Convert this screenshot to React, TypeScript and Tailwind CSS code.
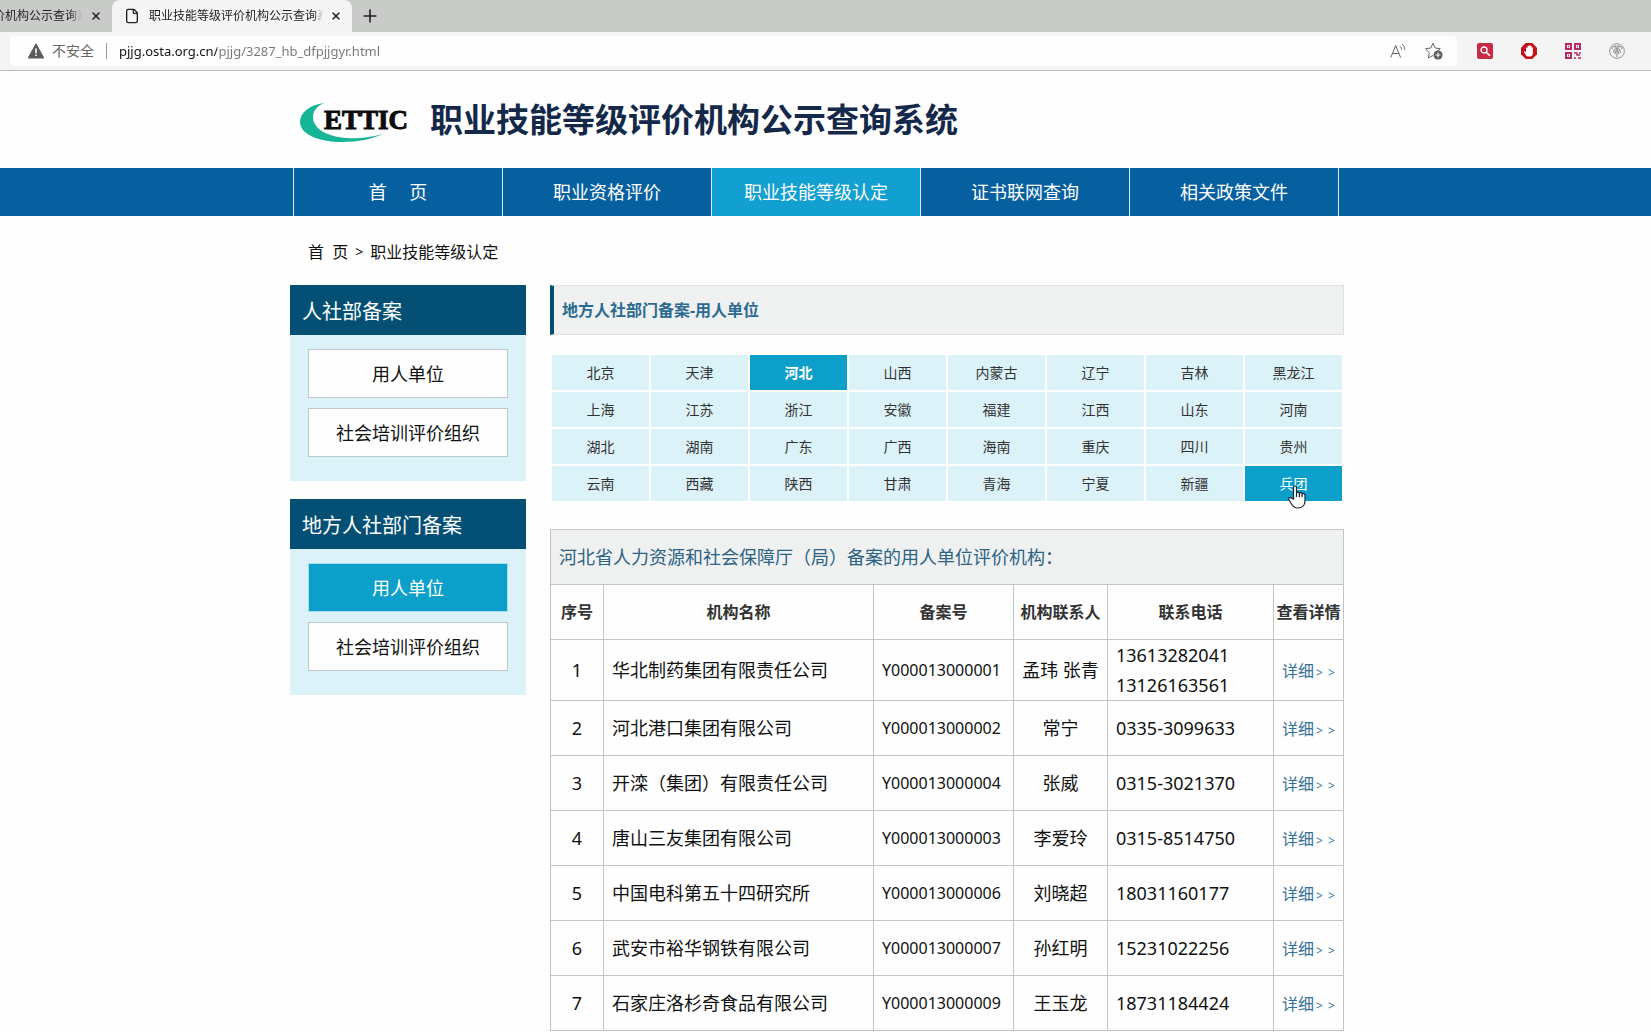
import React from 'react';
import { File, Plus, X } from 'lucide-react';

interface Organization {
  id: number;
  name: string;
  record: string;
  contact: string;
  phones: string[];
}

const NAV_ITEMS = ['首\u2003 页', '职业资格评价', '职业技能等级认定', '证书联网查询', '相关政策文件'];

const REGIONS = [
  '北京', '天津', '河北', '山西', '内蒙古', '辽宁', '吉林', '黑龙江',
  '上海', '江苏', '浙江', '安徽', '福建', '江西', '山东', '河南',
  '湖北', '湖南', '广东', '广西', '海南', '重庆', '四川', '贵州',
  '云南', '西藏', '陕西', '甘肃', '青海', '宁夏', '新疆', '兵团',
];

const ORGANIZATIONS: Organization[] = [
  { id: 1, name: '华北制药集团有限责任公司', record: 'Y000013000001', contact: '孟玮 张青', phones: ['13613282041', '13126163561'] },
  { id: 2, name: '河北港口集团有限公司', record: 'Y000013000002', contact: '常宁', phones: ['0335-3099633'] },
  { id: 3, name: '开滦（集团）有限责任公司', record: 'Y000013000004', contact: '张威', phones: ['0315-3021370'] },
  { id: 4, name: '唐山三友集团有限公司', record: 'Y000013000003', contact: '李爱玲', phones: ['0315-8514750'] },
  { id: 5, name: '中国电科第五十四研究所', record: 'Y000013000006', contact: '刘晓超', phones: ['18031160177'] },
  { id: 6, name: '武安市裕华钢铁有限公司', record: 'Y000013000007', contact: '孙红明', phones: ['15231022256'] },
  { id: 7, name: '石家庄洛杉奇食品有限公司', record: 'Y000013000009', contact: '王玉龙', phones: ['18731184424'] },
];

function TabStrip() {
  return (
    <div className="flex h-8 items-end bg-[#c9cbc8] text-xs text-[#222]">
      <div className="flex h-8 w-28 items-center justify-between pr-[10px]">
        <div className="w-[82px] overflow-hidden whitespace-nowrap mask-r-from-85%">
          <span className="-ml-[7px]">价机构公示查询系统</span>
        </div>
        <button aria-label="关闭标签页">
          <X className="h-3 w-3" strokeWidth={3} />
        </button>
      </div>
      <div className="flex h-8 w-60 items-center rounded-t-lg bg-[#f4f5f4] pr-[10px] pl-3">
        <File className="h-4 w-4 shrink-0" strokeWidth={2} />
        <span className="ml-[9px] w-[174px] overflow-hidden whitespace-nowrap mask-r-from-95%">
          职业技能等级评价机构公示查询系统
        </span>
        <button aria-label="关闭标签页" className="ml-auto">
          <X className="h-3 w-3" strokeWidth={3} />
        </button>
      </div>
      <button aria-label="新建标签页" className="flex h-8 items-center pl-2">
        <Plus className="h-5 w-5" strokeWidth={2} />
      </button>
    </div>
  );
}

function AddressBar() {
  return (
    <div className="flex h-[39px] items-center border-b border-[#b9bab9] bg-[#f4f4f4] pr-[26px] pl-[10px] text-sm">
      <div className="flex h-[30px] flex-1 items-center rounded bg-[#fefefe] pr-[14px] pl-[18px]">
        <svg viewBox="0 0 16 16" className="h-4 w-4" aria-hidden="true">
          <path d="M8 .8 15.8 15H.2Z" fill="#5c5c5c" stroke="#5c5c5c" strokeLinejoin="round" />
          <path d="M8 5.5v4.7M8 11.5v1.6" stroke="#fff" strokeWidth="1.6" />
        </svg>
        <span className="ml-2 text-[#666]">不安全</span>
        <span className="mx-3 h-4 w-px bg-[#999]" />
        <input
          aria-label="地址栏"
          defaultValue="pjjg.osta.org.cn/pjjg/3287_hb_dfpjjgyr.html"
          className="min-w-0 flex-1 bg-linear-to-r from-[#111] from-[98px] to-[#777] to-[98px] bg-clip-text text-[13px] text-transparent outline-none"
        />
        <button aria-label="大声朗读">
          <svg viewBox="0 0 16 16" className="h-4 w-4" fill="none" stroke="#666">
            <path d="M.8 14.5 5.7 2.5l4.9 12M2.5 10.5h6.4M10 3.2c1 .8 1.5 2 1.5 3.5M12 1c1.900 1.500 2.700 3.500 2.700 6" />
          </svg>
        </button>
        <button aria-label="收藏" className="ml-[19px]">
          <svg viewBox="0 0 18 18" className="h-[18px] w-[18px]" fill="none" stroke="#666">
            <path d="m8 1.300 2.200 4.700 5.100.7-3.700 3.500M8 13.500l-4.600 2.500.9-5.100L.7 6.700l5.100-.7L8 1.300" />
            <circle cx="13" cy="13" r="4.500" fill="#5c5c5c" stroke="none" />
            <path d="M13 10.500v5M10.500 13h5" stroke="#fff" />
          </svg>
        </button>
      </div>
      <div className="ml-5 flex gap-7">
        <button aria-label="搜索扩展">
          <svg viewBox="0 0 16 16" className="h-4 w-4">
            <rect width="16" height="16" rx="2" fill="#c62b48" />
            <circle cx="7" cy="7" r="3" fill="none" stroke="#fff" strokeWidth="1.300" />
            <path d="m9.300 9.300 3.500 3.400" stroke="#fff" strokeWidth="1.600" />
          </svg>
        </button>
        <button aria-label="广告拦截">
          <svg viewBox="0 0 16 16" className="h-4 w-4">
            <path d="M4.700 0h6.600L16 4.700v6.600L11.300 16H4.700L0 11.300V4.700Z" fill="#c3141d" />
            <path d="M5 5.200v4.300L3.900 8.300c-.6-.5-1.200 0-.9.600l2 3.400c.5.900 1.300 1.300 2.600 1.300h1.200c1.900 0 3-1.200 3-3V4.800c0-.9-1.200-.9-1.200 0V3.500c0-.9-1.300-.9-1.300 0v-.7c0-1-1.400-1-1.400 0v.7c0-.9-1.400-.9-1.400 0v1.700c0-.8-1.500-.8-1.500 0Z" fill="#fff" />
          </svg>
        </button>
        <button aria-label="二维码">
          <svg viewBox="0 0 16 16" className="h-4 w-4" fill="none" stroke="#b52a67" strokeWidth="2">
            <path d="M1 1h5v5H1ZM10 1h5v5h-5ZM1 10h5v5H1Z" />
            <path d="M3 3.500h1M12 3.500h1M3 12.500h1M9 10h3v2h3M9 15h2M13 15h3M15 9v2" strokeWidth="1.500" />
          </svg>
        </button>
        <button aria-label="扩展程序">
          <svg viewBox="0 0 16 16" className="h-4 w-4" fill="none" stroke="#999">
            <circle cx="8" cy="8" r="7.400" />
            <path d="M8 5.500V14M8 5.500C6 2.500 3.500 3 2.800 6M8 5.500c2-3 4.500-2.500 5.200.5M8 5.500c-2 0-3.500 1.500-3.300 4.500M8 5.500c2 0 3.500 1.500 3.300 4.500M8 6C6.500 8 6 9 6.500 11M8 6c1.500 2 2 3 1.500 5M5 3h6" strokeWidth="1.200" />
          </svg>
        </button>
      </div>
    </div>
  );
}

function Logo() {
  return (
    <svg viewBox="0 0 110 42" className="mt-2 h-[42px] w-[110px]" role="img" aria-label="ETTIC">
      <path
        d="M24 0C9 2 0 10 0 19c0 12 18 20 42 20 17 0 30-3 41-8-11 3-24 5-36 4C28 34 13 26 13 14c0-6 4-11 11-14Z"
        fill="#17b597"
      />
      <text
        x="24"
        y="26"
        fontSize="27"
        fontWeight="700"
        fill="#0c0c0c"
        stroke="#0c0c0c"
        strokeWidth="1"
        fontFamily="Liberation Serif, serif"
      >
        ETTIC
      </text>
    </svg>
  );
}

interface SideMenuProps {
  title: string;
  active?: string;
}

function SideMenu({ title, active }: SideMenuProps) {
  return (
    <section className="bg-[#dcf2f9]">
      <h2 className="flex h-[50px] items-center bg-[#045074] px-3 pt-[3px] text-xl text-white">{title}</h2>
      <div className="flex flex-col gap-[10px] px-[18px] pt-[14px] pb-6">
        {['用人单位', '社会培训评价组织'].map((item) => (
          <a
            key={item}
            href="#"
            className={`flex h-[49px] items-center justify-center border text-lg ${
              item === active ? 'border-[#a9dcee] bg-[#0c9fca] text-white' : 'border-[#bcc8cc] bg-[#fdfefd] text-[#111]'
            }`}
          >
            {item}
          </a>
        ))}
      </div>
    </section>
  );
}

function HandCursor() {
  return (
    <svg viewBox="0 0 18 24" className="absolute top-[19px] left-[43px] z-10 h-6 w-[18px]" aria-hidden="true">
      <path
        d="M5.500 14V2.500c0-2 3-2 3 0V8c.3-1.300 2.700-1.200 2.900.3.500-1 2.700-.9 2.800.700.600-.9 2.800-.6 2.800 1.200v5.300c0 4.500-2.500 7.500-7 7.500-3.200 0-5-1.300-6.300-3.700L.8 14.500c-.7-1.500 1.200-2.500 2.300-1.500Z"
        fill="#fff"
        stroke="#1c2330"
        strokeWidth="1.200"
      />
      <path d="M8.500 8v4M11.400 8.500v3.700M14.200 9.300v3" stroke="#1c2330" strokeWidth="1.200" />
    </svg>
  );
}

function RegionGrid() {
  return (
    <div className="mt-5 grid grid-cols-8 gap-[2px] px-[2px] text-sm">
      {REGIONS.map((region) => {
        const selected = region === '河北';
        const hovered = region === '兵团';
        return (
          <a
            key={region}
            href="#"
            className={`relative flex h-[35px] items-center justify-center ${
              selected || hovered ? 'bg-[#0c9fca] text-white' : 'bg-[#dcf2f9] text-[#333]'
            } ${selected ? 'font-bold' : ''}`}
          >
            {region}
            {hovered && <HandCursor />}
          </a>
        );
      })}
    </div>
  );
}

function OrganizationTable() {
  const cell = 'border border-[#c3c5c5]';

  return (
    <table className="mt-7 w-full table-fixed border-collapse text-lg text-[#111]">
      <colgroup>
        <col className="w-[53px]" />
        <col />
        <col className="w-[140px]" />
        <col className="w-[94px]" />
        <col className="w-[166px]" />
        <col className="w-[70px]" />
      </colgroup>
      <thead>
        <tr className="h-[55px] bg-[#eff1f0]">
          <th colSpan={6} className={`${cell} px-2 text-left font-normal text-[#2b6286]`}>
            河北省人力资源和社会保障厅（局）备案的用人单位评价机构：
          </th>
        </tr>
        <tr className="h-[55px] text-base whitespace-nowrap text-[#333]">
          {['序号', '机构名称', '备案号', '机构联系人', '联系电话', '查看详情'].map((label) => (
            <th key={label} className={`${cell} font-bold`}>{label}</th>
          ))}
        </tr>
      </thead>
      <tbody>
        {ORGANIZATIONS.map((org) => (
          <tr key={org.id} className="h-[55px] leading-[30px]">
            <td className={`${cell} text-center`}>{org.id}</td>
            <td className={`${cell} px-2`}>{org.name}</td>
            <td className={`${cell} px-2 text-base`}>{org.record}</td>
            <td className={`${cell} text-center whitespace-nowrap`}>{org.contact}</td>
            <td className={`${cell} px-2`}>
              {org.phones.map((phone) => (
                <div key={phone}>{phone}</div>
              ))}
            </td>
            <td className={`${cell} pt-[2px] text-center text-base whitespace-nowrap`}>
              <a href="#" className="text-[#34719a]">
                详细
                <span className="ml-[2px] inline-flex gap-[5px] text-xs">
                  <span>&gt;</span>
                  <span>&gt;</span>
                </span>
              </a>
            </td>
          </tr>
        ))}
      </tbody>
    </table>
  );
}

export default function App() {
  return (
    <div className="min-h-screen bg-[#fdfefd] font-['Noto_Sans','Noto_Sans_CJK_SC',sans-serif]">
      <TabStrip />
      <AddressBar />

      <header className="pr-[17px]">
        <div className="mx-auto flex h-[97px] max-w-[1054px] items-center pl-[10px]">
          <Logo />
          <h1 className="ml-5 text-[33px] font-bold text-[#14284a]">职业技能等级评价机构公示查询系统</h1>
        </div>
      </header>

      <nav className="bg-[#0660a0] pr-[17px]">
        <div className="mx-auto max-w-[1054px] pr-[5px] pl-[3px]">
          <ul className="grid h-12 grid-cols-5 border-r border-[#dcebf4]">
            {NAV_ITEMS.map((item) => (
              <li key={item} className="border-l border-[#dcebf4]">
                <a
                  href="#"
                  className={`flex h-full items-center justify-center text-lg text-white ${
                    item === '职业技能等级认定' ? 'bg-[#12a0d0]' : ''
                  }`}
                >
                  {item}
                </a>
              </li>
            ))}
          </ul>
        </div>
      </nav>

      <div className="pr-[17px]">
        <div className="mx-auto max-w-[1054px]">
          <div className="flex h-[69px] items-center gap-[7px] pt-[3px] pl-[18px] text-base text-[#111]">
            <a href="#" className="whitespace-pre">首  页</a>
            <span className="text-sm">&gt;</span>
            <a href="#">职业技能等级认定</a>
          </div>

          <div className="flex items-start gap-6">
            <aside className="flex w-[236px] shrink-0 flex-col gap-[18px]">
              <SideMenu title="人社部备案" />
              <SideMenu title="地方人社部门备案" active="用人单位" />
            </aside>
            <main className="min-w-0 flex-1">
              <h2 className="flex h-[50px] items-center border border-l-4 border-[#dfe1e1] border-l-[#045074] bg-[#eff1f0] px-2 text-base font-bold text-[#2b6a90]">
                地方人社部门备案-用人单位
              </h2>
              <RegionGrid />
              <OrganizationTable />
            </main>
          </div>
        </div>
      </div>
    </div>
  );
}
